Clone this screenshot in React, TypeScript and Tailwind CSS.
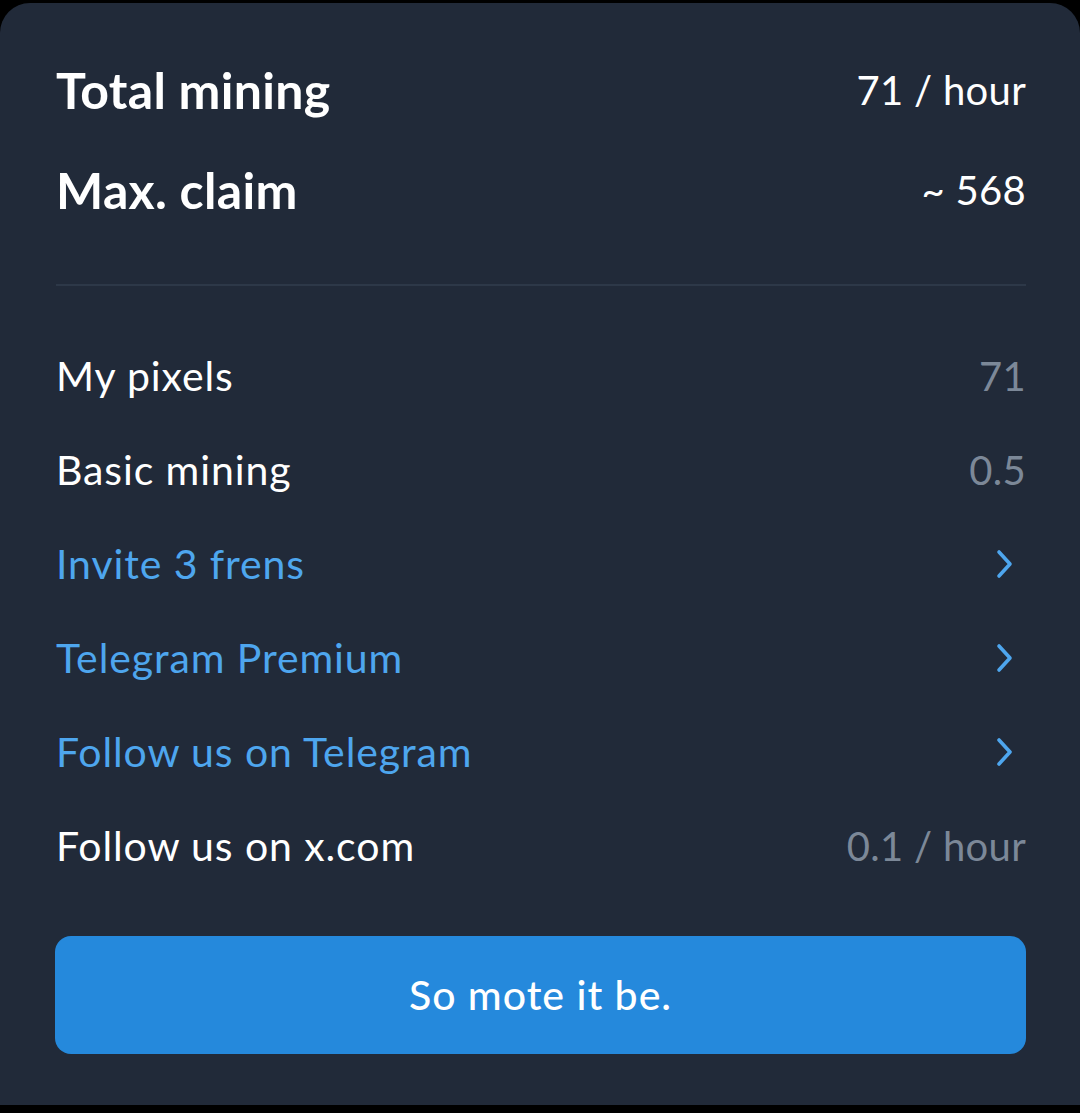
import React from 'react';

interface Row {
    label: string;
    value?: string;
    link?: boolean;
}

const rows: Row[] = [
    { label: 'My pixels', value: '71' },
    { label: 'Basic mining', value: '0.5' },
    { label: 'Invite 3 frens', link: true },
    { label: 'Telegram Premium', link: true },
    { label: 'Follow us on Telegram', link: true },
    { label: 'Follow us on x.com', value: '0.1 / hour' },
];

const Chevron = () => (
    <svg width="22" height="32" viewBox="0 0 22 32" fill="none" className="mr-[10px]">
        <path d="M5 4 L16 16 L5 28" stroke="#4ea6ee" strokeWidth="3.6" strokeLinecap="round" strokeLinejoin="round" />
    </svg>
);

const App = () => {
    return (
        <div className="min-h-screen bg-black pt-[3px]" style={{ fontFamily: 'Lato, "Open Sans", sans-serif' }}>
            <div className="h-[1102px] bg-[#212a39] rounded-t-[30px] pl-[55px] pr-[54px] pt-[37px]">
                <div className="h-[100px] flex items-center justify-between text-white">
                    <span className="text-[50px] font-bold tracking-[0.3px] pl-px">Total mining</span>
                    <span className="text-[40px] tracking-[0.3px]">71 / hour</span>
                </div>
                <div className="h-[100px] flex items-center justify-between text-white">
                    <span className="text-[50px] font-bold tracking-[0.3px] pl-px">Max. claim</span>
                    <span className="text-[40px] tracking-[0.3px]">~ 568</span>
                </div>
                <div className="mt-[44px] h-[2px] bg-[#2d3848] ml-px" />
                <div className="mt-[43px]">
                    {rows.map((row) => (
                        <div key={row.label} className="h-[94px] flex items-center justify-between">
                            <span className={`text-[41px] tracking-[0.9px] pl-px ${row.link ? 'text-[#4ea6ee]' : 'text-white'}`}>{row.label}</span>
                            {row.link ? <Chevron /> : <span className="text-[40px] tracking-[0.3px] text-[#7c8898]">{row.value}</span>}
                        </div>
                    ))}
                </div>
                <button className="mt-[43px] w-full h-[118px] rounded-[16px] bg-[#2589dc] text-white text-[41px] tracking-[1px] font-medium">
                    So mote it be.
                </button>
            </div>
        </div>
    );
};

export default App;
